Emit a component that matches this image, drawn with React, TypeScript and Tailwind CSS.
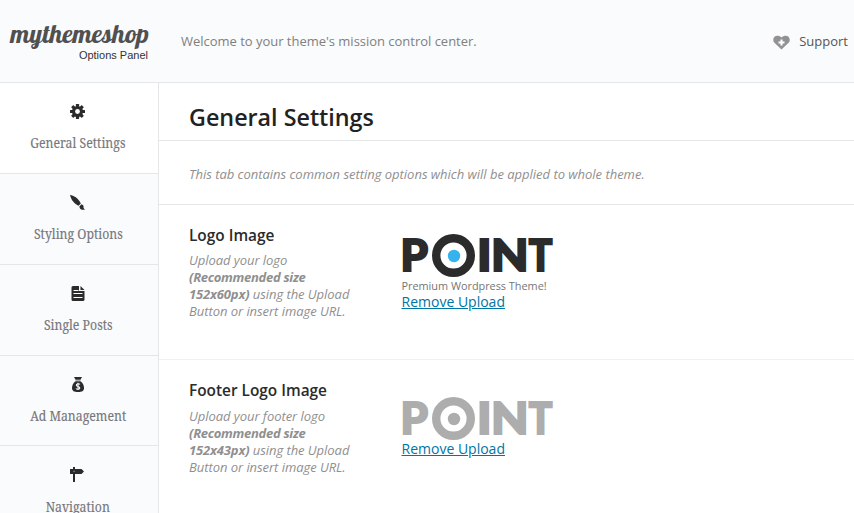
import React from "react";

const sans = "font-['Open_Sans','Noto_Sans',sans-serif]";

function Gear() {
  return (
    <svg width="15" height="15" viewBox="0 0 15 15" className="block" fill="#2b2b2b">
      <g>
        {[0, 45, 90, 135].map((a) => (
          <rect key={a} x="5.9" y="0" width="3.2" height="15" rx="0.4" transform={`rotate(${a} 7.5 7.5)`} />
        ))}
        <circle cx="7.5" cy="7.5" r="5.5" />
      </g>
      <circle cx="7.5" cy="7.5" r="2.4" fill="#fff" />
    </svg>
  );
}

function Brush() {
  return (
    <svg width="15" height="15" viewBox="0 0 15 15" className="block" fill="#2b2b2b">
      <path d="M0 0C3.6.5 8.300 3 10.800 8.400L8.600 10.700C4.500 9 1.200 5 0 0Z" />
      <path d="M11.500 9.300C13 9.800 13.800 10.800 13.500 12.300C13.500 13.300 14.200 14 15 14.500C13 15.300 10.700 14.700 9.900 13.300C9.500 12.500 9.500 11.700 9.500 11.200Z" />
    </svg>
  );
}

function Post() {
  return (
    <svg width="15" height="15" viewBox="0 0 15 15" className="block translate-x-[0.5px]">
      <path d="M2.500 0H8.500V5H14V13.500Q14 15 12.500 15H2.500Q1 15 1 13.500V1.500Q1 0 2.500 0Z" fill="#2b2b2b" />
      <path d="M10 0L14 4H10Z" fill="#2b2b2b" />
      <path d="M3 4.500H8M3 7.500H12M3 11.500H12" stroke="#fff" strokeWidth="1.200" />
    </svg>
  );
}

function Money() {
  return (
    <svg width="15" height="15" viewBox="0 0 15 15" className="block translate-x-[0.5px]">
      <path d="M3.500 0H11.500L10 2.700H5Z" fill="#2b2b2b" />
      <path d="M5 3.200H10V4H5Z" fill="#8a8a8a" />
      <path d="M5 4.200H10C12 5.600 13.500 8.200 13.500 10.700C13.500 14 11.500 15 7.500 15S1.500 14 1.500 10.700C1.500 8.200 3 5.600 5 4.200Z" fill="#2b2b2b" />
      <path d="M9.500 7.300C8.700 6.500 5.700 6.500 5.800 8.200C5.900 9.900 9.300 9.200 9.300 11C9.300 12.600 6.300 12.600 5.400 11.500M7.500 5.800V13" fill="none" stroke="#fff" strokeWidth="1.100" />
    </svg>
  );
}

function Sign() {
  return (
    <svg width="15" height="15" viewBox="0 0 15 15" className="block" fill="#2b2b2b">
      <path d="M3 0H5V15H3Z" />
      <path d="M0 2H11.500L14 4.500L11.500 7H0Z" />
      <path d="M3.500 3.800H4.700V5H3.500Z" fill="#999" />
    </svg>
  );
}

function NavItem({ icon, label, box, gap = "mt-[14px]" }: { icon: React.ReactNode; label: string; box: string; gap?: string }) {
  return (
    <a className={`flex shrink-0 flex-col items-center border-b border-[#e5e6e8] ${box}`}>
      {icon}
      <span className={`block h-[20px] translate-x-[0.5px] scale-x-[0.91] font-['Droid_Serif','Noto_Serif','Liberation_Serif',serif] text-[13.5px] leading-[20px] whitespace-nowrap text-[#77777b] [-webkit-text-stroke:0.15px_#77777b] ${gap}`}>
        {label}
      </span>
    </a>
  );
}

function PointLogo({ color, dot }: { color: string; dot: string }) {
  const letters = [
    { c: "P", x: -1.5, w: 27.5 },
    { c: "I", x: 75, w: 14.6 },
    { c: "N", x: 88.9, w: 37.6 },
    { c: "T", x: 126.8, w: 23.6 },
  ];
  return (
    <svg width="152" height="43" viewBox="0 0 152 43" className="block overflow-visible">
      {letters.map((l) => (
        <text
          key={l.c}
          x={l.x}
          y="37.3"
          textLength={l.w}
          lengthAdjust="spacingAndGlyphs"
          fill={color}
          stroke={color}
          strokeWidth="2"
          className="font-['Lato',sans-serif] text-[44px] leading-none font-black"
        >
          {l.c}
        </text>
      ))}
      <circle cx="51.500" cy="21.500" r="17.300" fill="#fff" stroke={color} strokeWidth="8.400" />
      <circle cx="52" cy="22" r="6.200" fill={dot} />
    </svg>
  );
}

function Setting({ title, first, size, box, gap, children }: { title: string; first: string; size: string; box: string; gap: string; children: React.ReactNode }) {
  return (
    <section className={`flex shrink-0 pl-[30px] ${box}`}>
      <div className="w-[212.5px] pt-[19px]">
        <h2 className="text-[15.4px] leading-[24px] font-semibold text-[#2b2b2b]">{title}</h2>
        <p className={`text-[13px] leading-[17px] tracking-[-0.05px] whitespace-nowrap text-[#8f8f8f] italic ${gap}`}>
          {first}
          <br />
          <strong className="font-bold tracking-[-0.28px]">(Recommended size</strong>
          <br />
          <strong className="font-bold tracking-[-0.15px]">{size}</strong> using the Upload
          <br />
          Button or insert image URL.
        </p>
      </div>
      <div>{children}</div>
    </section>
  );
}

function RemoveLink() {
  return <a className="block text-[14px] leading-[18px] text-[#0074a2] underline">Remove Upload</a>;
}

export default function App() {
  return (
    <div className={`flex h-[513px] w-[854px] flex-col overflow-hidden bg-white ${sans}`}>
      <header className="flex h-[83px] shrink-0 items-start border-b border-[#e5e6e8] bg-[#fafbfd]">
        <div className="w-[181px] shrink-0 pt-[18px]">
          <svg width="160" height="30" className="block overflow-visible">
            <text x="10.5" y="24.500" textLength="138.5" lengthAdjust="spacingAndGlyphs" fill="#505050" className="font-['Lobster','Liberation_Serif',serif] text-[26px]">
              mythemeshop
            </text>
          </svg>
          <div className="w-[148px] text-right font-['Liberation_Sans',sans-serif] text-[11px] leading-[14px] text-[#333]">Options Panel</div>
        </div>
        <p className="pt-[32px] text-[13px] leading-[18px] tracking-[-0.02px] text-[#808080]">Welcome to your theme's mission control center.</p>
        <div className="mr-[6px] ml-auto flex items-center gap-[9px] pt-[32px]">
          <svg width="17" height="15" viewBox="0 0 17 15" className="mt-[3px] block">
            <path d="M8.500 14.500L1.400 7.800C-.3 6 .1 3.200 1.500 1.800C3.300 0 6.700.3 8.500 2.500C10.300.3 13.700 0 15.500 1.800C16.900 3.200 17.300 6 15.600 7.800Z" fill="#929292" />
            <path d="M8.500 4.500V10.500M5.500 7.500H11.500" stroke="#fff" strokeWidth="2" />
          </svg>
          <span className="text-[13px] leading-[18px] text-[#555]">Support</span>
        </div>
      </header>

      <div className="flex min-h-0 flex-1">
        <nav className="flex w-[159px] shrink-0 flex-col overflow-hidden border-r border-[#e5e6e8]">
          <NavItem icon={<Gear />} label="General Settings" box="h-[91px] bg-white pt-[21px] pr-[3px]" />
          <NavItem icon={<Brush />} label="Styling Options" box="h-[91px] bg-[#fafbfd] pt-[21px] pr-[3px]" />
          <NavItem icon={<Post />} label="Single Posts" box="h-[91px] bg-[#fafbfd] pt-[21px] pr-[3px]" />
          <NavItem icon={<Money />} label="Ad Management" box="h-[90px] bg-[#fafbfd] pt-[21px] pr-[3px]" />
          <NavItem icon={<Sign />} label="Navigation" box="h-[91px] bg-[#fafbfd] pt-[21px] pr-[3px]" gap="mt-[15px]" />
        </nav>

        <main className="flex flex-1 flex-col overflow-hidden">
          <h1 className="h-[58px] shrink-0 border-b border-[#e5e6e8] pt-[18px] pl-[30px] text-[23.300px] leading-[32px] font-semibold text-[#222]">General Settings</h1>
          <p className="h-[64px] shrink-0 border-b border-[#e5e6e8] pt-[24px] pl-[30px] text-[13px] leading-[18px] tracking-[-0.02px] text-[#8f8f8f] italic">
            This tab contains common setting options which will be applied to whole theme.
          </p>
          <Setting title="Logo Image" first="Upload your logo" size="152x60px)" box="h-[155px] border-b border-[#f0f0f1]" gap="mt-[4px]">
            <div className="pt-[29px]">
              <PointLogo color="#2b2b2b" dot="#35b3ee" />
              <div className="h-[16px] pt-[2px] text-[10.900px] leading-[14px] tracking-[-0.02px] text-[#757575]">Premium Wordpress Theme!</div>
              <RemoveLink />
            </div>
          </Setting>
          <Setting title="Footer Logo Image" first="Upload your footer logo" size="152x43px)" box="h-[154px]" gap="mt-[5px]">
            <div className="pt-[37px]">
              <PointLogo color="#adadad" dot="#adadad" />
              <RemoveLink />
            </div>
          </Setting>
        </main>
      </div>
    </div>
  );
}
